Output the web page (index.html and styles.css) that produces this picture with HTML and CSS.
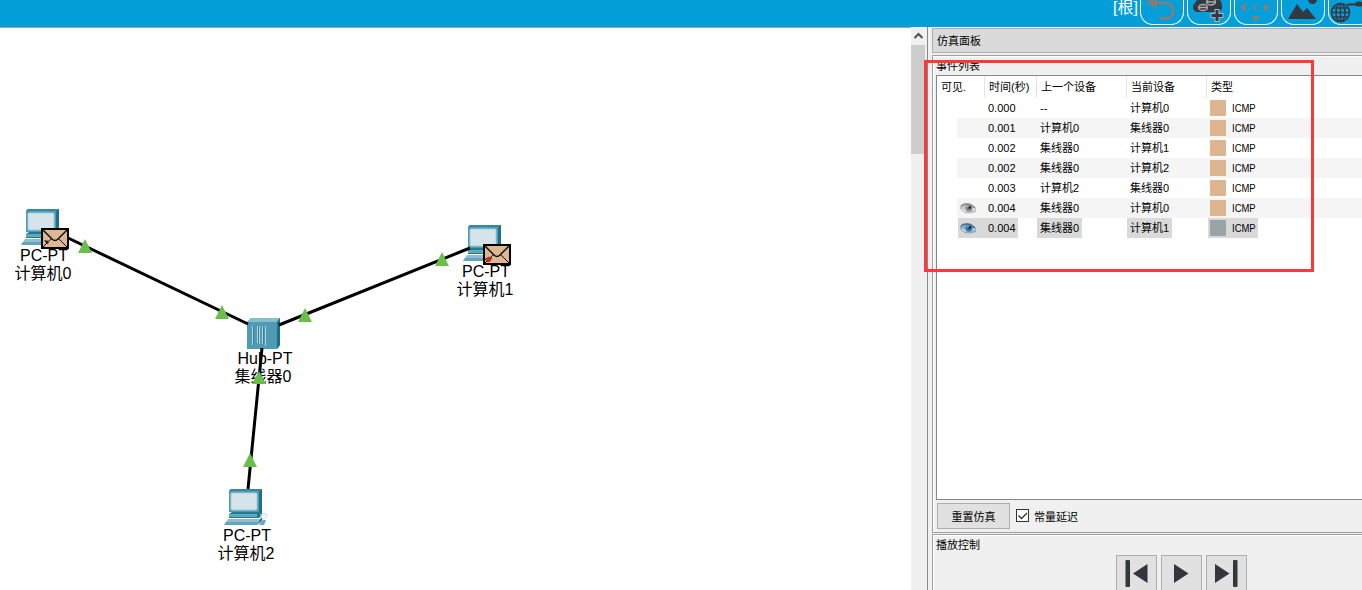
FILE: index.html
```html
<!DOCTYPE html>
<html lang="zh-CN">
<head>
<meta charset="utf-8">
<title>仿真面板</title>
<link rel="stylesheet" href="styles.css">
</head>
<body>
<svg class="defs" width="0" height="0">
  <defs>
    <symbol id="pc" viewBox="0 0 46 38">
      <path d="M5 3 7 1H38V24L35 27Z" fill="#1d718c"/>
      <path d="M5 3 7 1H38L35 4H5Z" fill="#3588a2"/>
      <rect x="5" y="3" width="30" height="21" fill="#519ab4"/>
      <rect x="7" y="5" width="26" height="17" rx="1" fill="#d5e4ea" stroke="#a9cdda"/>
      <path d="M5 26 8 24H38V27L35 30H5Z" fill="#1f7a96"/>
      <path d="M5 26H33V29H5Z" fill="#61a8bd"/>
      <path d="M4 31H36L33 37H0Z" fill="#8fbfce"/>
      <path d="M2 34H34L33 37H0Z" fill="#63a5ba"/>
      <path d="M36 31 38 29V33L33 37Z" fill="#287b94"/>
      <path d="M36 27Q44 24 43 28L38 32" fill="none" stroke="#bed9e3"/>
      <path d="M37 34 39 32H42L40 37H35Z" fill="#69a9bd"/>
    </symbol>
    <symbol id="mail" viewBox="0 0 28 21">
      <rect x="1" y="1" width="26" height="19" fill="#dfb892" stroke="#000" stroke-width="2"/>
      <path d="M2 2 11 11Q14 14 17 11L26 2" fill="none" stroke="#111" stroke-width="1.5"/>
      <path d="M2 19 10 11M18 11 26 19" fill="none" stroke="#111"/>
    </symbol>
    <symbol id="eye" viewBox="0 0 16 12">
      <path d="M0 4Q5-1 12 2L16 6V10Q8 13 3 10L0 7Z" fill="currentColor" opacity=".45"/>
      <path d="M1 4Q7-1 15 6" fill="none" stroke="currentColor" stroke-width="1.4"/>
      <path d="M2 7Q4 9 6 9M12 8 15 7" stroke="#fff" stroke-width="2" opacity=".45"/>
      <circle cx="9" cy="6" r="3.4" fill="currentColor"/><circle cx="9.5" cy="5.5" r="1.4" fill="#222"/><circle cx="8" cy="4.6" r=".8" fill="#ddd"/>
    </symbol>
  </defs>
</svg>
<div class="app">
  <header class="topbar">
    <span class="root">[根]</span>
    <span class="tool"><svg viewBox="0 0 42 24"><path d="M13 3H26A8.5 8 0 0 1 26 18.500H19" fill="none" stroke="#7f7f7f" stroke-width="3"/><path d="M5 2.500 16-4V9Z" fill="#7f7f7f"/></svg></span>
    <span class="tool"><svg viewBox="0 0 42 24"><path d="M10 12A5 5 0 0 1 7 3Q11-4 18-4H27Q35 0 34 8 33 12 28 12Z" fill="#343840"/><g fill="#343840" stroke="#aaa" stroke-width="1.3"><ellipse cx="15" cy="7.500" rx="4.500" ry="3"/><ellipse cx="23" cy="2" rx="4.500" ry="3"/><path d="M11 7.500H19M19 2H27"/></g><path d="M29 9V22M22.500 15.500H35.500" stroke="#aeb8bb" stroke-width="5"/><path d="M29 10V21M23.500 15.500H34.500" stroke="#343840" stroke-width="3"/></svg></span>
    <span class="tool"><svg viewBox="0 0 42 24"><path d="M5 7.500 11 3V12ZM35 7.500 29 3V12ZM16 16H25L20.500 22Z" fill="#7f7f7f"/><circle cx="20" cy="7.500" r="2" fill="#7f7f7f"/></svg></span>
    <span class="tool"><svg viewBox="0 0 42 24"><path d="M6 19 15 4 21 12 25 8 34 19Z" fill="#343840"/><circle cx="30.500" cy="-.5" r="4.500" fill="#343840"/></svg></span>
    <span class="tool"><svg viewBox="0 0 42 24"><g fill="none" stroke="#343840" stroke-width="1.500"><circle cx="11.500" cy="12.500" r="9"/><ellipse cx="11.500" cy="12.500" rx="4.500" ry="9"/><path d="M11.500 3V22M2 12.500H21M4 8H19M4 17H19"/></g><path d="M18 4.500H29" stroke="#343840" stroke-width="2"/><ellipse cx="30" cy="4" rx="4" ry="2.500" fill="#343840"/></svg></span>
  </header>
  <main class="main">
    <section class="workspace">
      <svg class="links" viewBox="0 28 911 562">
        <path d="M66 237 248 324M279 325 470 248" stroke="#000" stroke-width="3"/>
        <path d="M262 348 248 489" stroke="#000" stroke-width="3"/>
        <g fill="#6abf4b"><path d="M78 253 85 239 92 253ZM215 319 222 305 229 319ZM298 322 305 308 312 322ZM435 266 442 252 449 266ZM252 384 259 371 266 384ZM243 467 250 453 257 467Z"/></g>
      </svg>
      <div class="node pc0"><svg class="pcicon" viewBox="0 0 46 38"><use href="#pc"/></svg><span>PC-PT</span><span class="name">计算机0</span>
        <svg class="mail" viewBox="0 0 28 21"><use href="#mail"/><path d="M3 12 8 13 7 16 5 15Z" fill="#222"/></svg></div>
      <div class="node pc1"><svg class="pcicon" viewBox="0 0 46 38"><use href="#pc"/></svg><span>PC-PT</span><span class="name">计算机1</span>
        <svg class="mail" viewBox="0 0 28 21"><use href="#mail"/><path d="M2 15 6 13 9 14 7 17 5 18Z" fill="#e2231a" stroke="#622" stroke-width=".6"/></svg></div>
      <div class="node pc2"><svg class="pcicon" viewBox="0 0 46 38"><use href="#pc"/></svg><span>PC-PT</span><span class="name">计算机2</span></div>
      <div class="node hub"><svg class="hubicon" viewBox="0 0 34 31"><path d="M0 4 4 0H33V27L30 31H0Z" fill="#4f9bb4"/><path d="M0 4 4 0H33L30 4Z" fill="#8abdcb"/><path d="M30 4 33 0V27L30 31Z" fill="#18718b"/><path d="M5.500 8V27M10.500 8V25M12.500 8V26M15.500 8V26M18.500 8V28" stroke="#b4d5df"/><path d="M6.500 8V27M11.500 8V25M16.500 8V26" stroke="#33819c"/></svg><span class="model">Hub-PT</span><span class="name">集线器0</span></div>
    </section>
    <div class="scroll"><svg viewBox="0 0 14 17"><path d="M3.500 10.500 7.500 6.500 11.500 10.500" fill="none" stroke="#505050" stroke-width="2"/></svg><div class="thumb"></div></div>
    <aside class="panel">
      <h1 class="title">仿真面板</h1>
      <section class="group events">
        <h2>事件列表</h2>
        <div class="table">
          <div class="row head"><span>可见.</span><span>时间(秒)</span><span>上一个设备</span><span>当前设备</span><span>类型</span></div>
          <div class="row"><span></span><span>0.000</span><span>--</span><span>计算机0</span><span><i></i><b>ICMP</b></span></div>
          <div class="row alt"><span></span><span>0.001</span><span>计算机0</span><span>集线器0</span><span><i></i><b>ICMP</b></span></div>
          <div class="row"><span></span><span>0.002</span><span>集线器0</span><span>计算机1</span><span><i></i><b>ICMP</b></span></div>
          <div class="row alt"><span></span><span>0.002</span><span>集线器0</span><span>计算机2</span><span><i></i><b>ICMP</b></span></div>
          <div class="row"><span></span><span>0.003</span><span>计算机2</span><span>集线器0</span><span><i></i><b>ICMP</b></span></div>
          <div class="row alt"><span><svg class="eye" viewBox="0 0 16 12"><use href="#eye"/></svg></span><span>0.004</span><span>集线器0</span><span>计算机0</span><span><i></i><b>ICMP</b></span></div>
          <div class="row selected"><span><svg class="eye blue" viewBox="0 0 16 12"><use href="#eye"/></svg></span><span>0.004</span><span>集线器0</span><span>计算机1</span><span><i></i><b>ICMP</b></span></div>
        </div>
        <div class="options"><button>重置仿真</button><span class="check"><svg viewBox="0 0 11 11"><path d="M1.500 5.500 4.500 8.500 10 3" fill="none" stroke="#333" stroke-width="1.400"/></svg></span><span>常量延迟</span></div>
      </section>
      <section class="group playback">
        <h2>播放控制</h2>
        <div class="controls">
          <button><svg viewBox="0 0 41 36"><rect x="9.500" y="5" width="4.500" height="27" rx="1" fill="#34363e"/><path d="M17 18.500 31.500 9V28Z" fill="#34363e"/></svg></button>
          <button><svg viewBox="0 0 41 36"><path d="M27.500 18.500 13 9V28Z" fill="#34363e"/></svg></button>
          <button><svg viewBox="0 0 41 36"><path d="M23.500 18.500 9 9V28Z" fill="#34363e"/><rect x="27" y="5" width="4.500" height="27" rx="1" fill="#34363e"/></svg></button>
        </div>
      </section>
    </aside>
  </main>
  <div class="highlight"></div>
</div>
</body>
</html>
```
FILE: styles.css
```css
* { box-sizing: border-box; }
body { margin: 0; font-family: "Liberation Sans", "Noto Sans CJK SC", sans-serif; color: #000; }
svg { display: block; }
.defs { position: absolute; }
.app { position: relative; width: 1362px; height: 590px; overflow: hidden; background: #f0f0f0; }
.topbar { height: 27px; background: #049fd9; display: flex; justify-content: flex-end; align-items: flex-start; gap: 3px; overflow: hidden; margin-right: -10px; }
.root { color: #fff; font-size: 16px; line-height: 16px; margin-right: -1px; }
.tool { width: 44px; height: 25px; border: 1.500px solid #fff; border-top: 0; border-radius: 0 0 13px 13px; flex: none; overflow: hidden; }
.tool svg { width: 42px; height: 24px; overflow: visible; }
.main { display: flex; height: 563px; }
.workspace { position: relative; width: 911px; background: #fff; border-top: 1px solid #a0a0a0; }
.links { position: absolute; left: 0; top: 0; width: 911px; height: 562px; z-index: 2; }
.node { position: absolute; width: 70px; display: flex; flex-direction: column; align-items: center; font-size: 16px; line-height: 18px; }
.node > span { white-space: nowrap; height: 18px; }
.node > .name { margin-right: 2px; }
.node > .model { margin-left: 2px; }
.pc0 { left: 9px; top: 180px; }
.pc1 { left: 451px; top: 196px; }
.pc2 { left: 212px; top: 460px; }
.hub { left: 229px; top: 290px; }
.pcicon { width: 46px; height: 38px; margin-bottom: 1px; }
.hubicon { width: 34px; height: 31px; margin-bottom: 1px; }
.mail { position: absolute; z-index: 3; left: 32px; top: 20px; width: 28px; height: 21px; }
.scroll { width: 17px; padding-right: 2px; border-right: 1px solid #828790; background: #f0f0f0; }
.scroll svg { width: 14px; height: 18px; }
.thumb { height: 109px; background: #cdcdcd; }
.panel { flex: 1; min-width: 0; padding: 1px 0 0 4px; font-size: 11px; margin-right: -4px; }
.title { height: 25px; margin: 0 0 2px; padding-left: 4px; border: 1px solid #adadad; background: #dadada; font-size: 11px; font-weight: 400; line-height: 24px; }
.group { border: 1px solid #a0a0a0; box-shadow: inset 1px 1px #fff; padding-left: 3px; }
.group h2 { margin: 0; font-size: 11px; font-weight: 400; line-height: 21px; height: 19px; }
.events { height: 478px; margin-bottom: 1px; }
.table { height: 425px; background: #fff; border: 1px solid #828790; }
.row { height: 20px; display: grid; grid-template-columns: 47px 52px 90px 80px 1fr; line-height: 20px; }
.row > span { padding-left: 4px; white-space: nowrap; }
.row > span:nth-child(5) { display: flex; align-items: center; }
.row.head { height: 22px; line-height: 22px; grid-template-columns: 48px 52px 90px 80px 1fr; }
.head > span { border-right: 1px solid #e5e5e5; }
.head > span:last-child { border: 0; }
.alt { background: linear-gradient(to right, #fff 20px, #f5f5f5 20px); }
.row i { width: 16px; height: 16px; background: #dcb48f; margin-right: 6px; }
.row b { font-weight: 400; transform: scaleX(.86); transform-origin: left; }
.row > span:first-child:has(.eye) { padding: 4px 0 0 23px; }
.eye { width: 16px; height: 12px; color: #888; }
.blue { color: #3676a5; }
.selected { background: linear-gradient(#d9d9d9, #d9d9d9) 21px 0 / 60px 20px no-repeat, linear-gradient(#d9d9d9, #d9d9d9) 100px 0 / 45px 20px no-repeat, linear-gradient(#d9d9d9, #d9d9d9) 190px 0 / 45px 20px no-repeat, linear-gradient(#d9d9d9, #d9d9d9) 271px 0 / 50px 20px no-repeat; }
.selected i { background: #9aa3a6; }
button { padding: 0; border: 1px solid #adadad; background: #e1e1e1; font: inherit; color: inherit; }
.options { display: flex; align-items: center; height: 31px; padding-left: 1px; }
.options button { width: 73px; height: 26px; }
.check { width: 13px; height: 13px; border: 1px solid #333; background: #fff; margin: 0 5px 0 6px; }
.playback { height: 80px; }
.controls { display: flex; gap: 4px; padding: 1px 0 0 180px; }
.controls button { display: flex; align-items: flex-start; width: 41px; height: 40px; overflow: hidden; }
.controls svg { flex: none; width: 41px; height: 36px; margin-left: -1px; margin-top: -1px; }
.highlight { position: absolute; left: 924px; top: 60px; width: 390px; height: 212px; border: 3px solid #fc3838; z-index: 5; }
```
